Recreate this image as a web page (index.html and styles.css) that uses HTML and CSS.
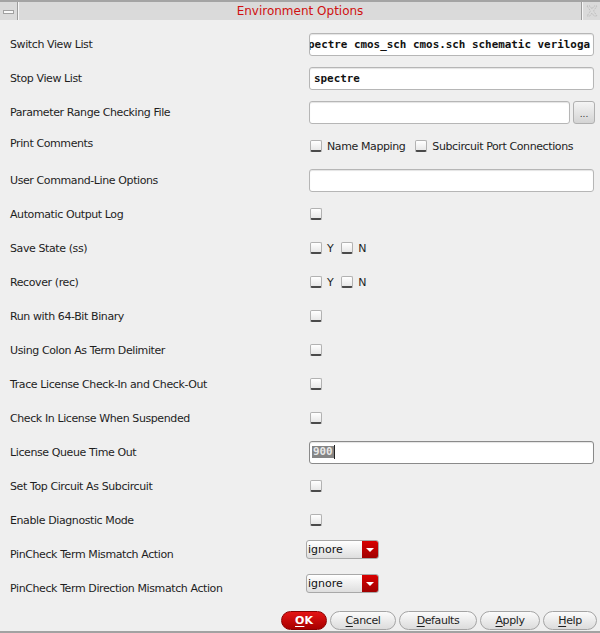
FILE: index.html
```html
<!DOCTYPE html>
<html>
<head>
<meta charset="utf-8">
<link rel="stylesheet" href="styles.css">
</head>
<body>
<div class="window">
  <div class="titlebar">
    <div class="tb-btn tb-menu"><span class="menu-bar"></span></div>
    <div class="title">Environment Options</div>
    <div class="tb-btn tb-close">
      <svg width="12" height="12" viewBox="0 0 12 12"><path d="M1 1 L4 1 L6 4 L8 1 L11 1 L7.5 6 L11 11 L8 11 L6 8 L4 11 L1 11 L4.5 6 Z" fill="none" stroke="#b8b8b8" stroke-width="1" stroke-dasharray="1 1"/></svg>
    </div>
  </div>
  <div class="form">
    <div class="row"><div class="label">Switch View List</div><div class="ctrl"><div class="input mono scroll"><span>spectre cmos_sch cmos.sch schematic veriloga</span></div></div></div>
    <div class="row"><div class="label">Stop View List</div><div class="ctrl"><div class="input mono"><span>spectre</span></div></div></div>
    <div class="row"><div class="label">Parameter Range Checking File</div><div class="ctrl"><div class="input short"></div><div class="browse">...</div></div></div>
    <div class="row"><div class="label lift">Print Comments</div><div class="ctrl"><span class="cb"></span><span class="cbl">Name Mapping</span><span class="cb"></span><span class="cbl">Subcircuit Port Connections</span></div></div>
    <div class="row"><div class="label">User Command-Line Options</div><div class="ctrl"><div class="input"></div></div></div>
    <div class="row"><div class="label">Automatic Output Log</div><div class="ctrl"><span class="cb"></span></div></div>
    <div class="row"><div class="label">Save State (ss)</div><div class="ctrl"><span class="cb"></span><span class="cbl yn">Y</span><span class="cb"></span><span class="cbl yn">N</span></div></div>
    <div class="row"><div class="label">Recover (rec)</div><div class="ctrl"><span class="cb"></span><span class="cbl yn">Y</span><span class="cb"></span><span class="cbl yn">N</span></div></div>
    <div class="row"><div class="label">Run with 64-Bit Binary</div><div class="ctrl"><span class="cb"></span></div></div>
    <div class="row"><div class="label">Using Colon As Term Delimiter</div><div class="ctrl"><span class="cb"></span></div></div>
    <div class="row"><div class="label">Trace License Check-In and Check-Out</div><div class="ctrl"><span class="cb"></span></div></div>
    <div class="row"><div class="label">Check In License When Suspended</div><div class="ctrl"><span class="cb"></span></div></div>
    <div class="row"><div class="label">License Queue Time Out</div><div class="ctrl"><div class="input mono focus"><span class="sel">900</span><span class="caret"></span></div></div></div>
    <div class="row"><div class="label">Set Top Circuit As Subcircuit</div><div class="ctrl"><span class="cb"></span></div></div>
    <div class="row"><div class="label">Enable Diagnostic Mode</div><div class="ctrl"><span class="cb"></span></div></div>
    <div class="row"><div class="label">PinCheck Term Mismatch Action</div><div class="ctrl"><div class="combo"><span class="combo-text">ignore</span><span class="combo-arrow"></span></div></div></div>
    <div class="row"><div class="label">PinCheck Term Direction Mismatch Action</div><div class="ctrl"><div class="combo"><span class="combo-text">ignore</span><span class="combo-arrow"></span></div></div></div>
  </div>
  <div class="buttons">
    <div class="btn ok"><u>O</u>K</div>
    <div class="btn w-cancel"><u>C</u>ancel</div>
    <div class="btn w-defaults"><u>D</u>efaults</div>
    <div class="btn w-apply"><u>A</u>pply</div>
    <div class="btn w-help"><u>H</u>elp</div>
  </div>
</div>
</body>
</html>
```

FILE: styles.css
```css
html, body {
  margin: 0;
  padding: 0;
  background: #efefef;
}
.window {
  width: 600px;
  height: 633px;
  display: flex;
  flex-direction: column;
  background: #efefef;
  font-family: "DejaVu Sans", sans-serif;
  font-size: 11px;
  color: #1e1e1e;
  box-sizing: border-box;
  border-bottom: 2px solid #a2a2a2;
}
.titlebar {
  height: 18px;
  border-top: 2px solid #a4a4a4;
  background: #dadada;
  display: flex;
  align-items: stretch;
}
.tb-btn {
  width: 17px;
  display: flex;
  align-items: center;
  justify-content: center;
  flex: none;
}
.tb-menu {
  border-right: 1px solid #9c9c9c;
  box-shadow: 1px 0 0 #f6f6f6;
}
.menu-bar {
  width: 9px;
  height: 2px;
  background: #f8f8f8;
  border: 1px solid #a0a0a0;
  margin-top: 2px;
}
.tb-close {
  border-left: 1px solid #f6f6f6;
  box-shadow: -1px 0 0 #9c9c9c;
  width: 17px;
}
.title {
  flex: 1;
  text-align: center;
  color: #d01010;
  font-size: 12px;
  line-height: 18px;
}
.form {
  padding-top: 7px;
  display: flex;
  flex-direction: column;
}
.row {
  height: 34px;
  display: grid;
  grid-template-columns: 306px 1fr;
  align-items: center;
}
.label {
  padding-left: 10px;
  letter-spacing: -0.4px;
  white-space: nowrap;
}
.label.lift {
  padding-bottom: 5px;
}
.ctrl {
  display: flex;
  align-items: center;
  padding-right: 6px;
}
.input {
  margin-left: 3px;
  width: 285px;
  height: 23px;
  box-sizing: border-box;
  border: 1px solid #b6b6b6;
  border-radius: 3px;
  background: #fff;
  box-shadow: inset 0 1px 1px #e4e4e4;
  display: flex;
  align-items: center;
  padding: 0 4px;
  overflow: hidden;
  white-space: nowrap;
}
.input.short {
  width: 261px;
}
.mono {
  font-family: "DejaVu Sans Mono", monospace;
  font-weight: bold;
  font-size: 10.9px;
  color: #111;
}
.scroll {
  justify-content: flex-end;
  padding-right: 3px;
  padding-left: 0;
}
.scroll span {
  flex: none;
}
.input.focus {
  border-color: #8a8a8a;
  padding-left: 2px;
}
.sel {
  background: #858585;
  color: #e8e8e8;
  padding: 0 1px;
  line-height: 12px;
}
.caret {
  width: 1px;
  height: 14px;
  background: #222;
}
.browse {
  margin-left: 3px;
  width: 22px;
  height: 23px;
  box-sizing: border-box;
  border: 1px solid #b0b0b0;
  border-radius: 3px;
  background: linear-gradient(#f4f4f4, #d4d4d4);
  font-size: 9px;
  color: #333;
  display: flex;
  justify-content: center;
  align-items: flex-end;
  padding-bottom: 5px;
  line-height: 8px;
}
.cb {
  width: 12px;
  height: 12px;
  box-sizing: border-box;
  border: 1px solid #b2b2b2;
  border-bottom: 2px solid #4a4a4a;
  border-radius: 2px;
  background: linear-gradient(#ffffff, #e8e8e8);
  margin-left: 4px;
  flex: none;
}
.cbl {
  margin-left: 5px;
  margin-right: 6px;
  letter-spacing: -0.4px;
  white-space: nowrap;
}
.cbl.yn {
  margin-right: 4px;
}
.combo {
  width: 73px;
  height: 19px;
  margin-bottom: 9px;
  box-sizing: border-box;
  border: 1px solid #a8a8a8;
  border-radius: 3px;
  background: linear-gradient(#ffffff, #dedede);
  display: flex;
  overflow: hidden;
}
.combo-text {
  flex: 1;
  padding-left: 1px;
  line-height: 17px;
  font-size: 11px;
  color: #111;
}
.combo-arrow {
  width: 16px;
  background: linear-gradient(#d80000, #a00000);
  display: flex;
  align-items: center;
  justify-content: center;
}
.combo-arrow::after {
  content: "";
  width: 0;
  height: 0;
  border-left: 4px solid transparent;
  border-right: 4px solid transparent;
  border-top: 4px solid #fff;
}
.buttons {
  margin-top: 6px;
  display: flex;
  justify-content: flex-end;
  padding-right: 3px;
  gap: 3px;
}
.btn {
  height: 19px;
  box-sizing: border-box;
  border: 1px solid #a4a4a4;
  border-radius: 10px;
  background: linear-gradient(#fbfbfb, #dcdcdc);
  display: flex;
  align-items: center;
  justify-content: center;
  letter-spacing: -0.4px;
  color: #1e1e1e;
}
.btn u {
  text-underline-offset: 2px;
}
.ok {
  width: 46px;
  background: linear-gradient(#e41414, #a80000);
  border-color: #8a0000;
  color: #fff;
  font-weight: bold;
  letter-spacing: 0;
}
.w-cancel { width: 66px; }
.w-defaults { width: 78px; }
.w-apply { width: 60px; }
.w-help { width: 54px; }
```
